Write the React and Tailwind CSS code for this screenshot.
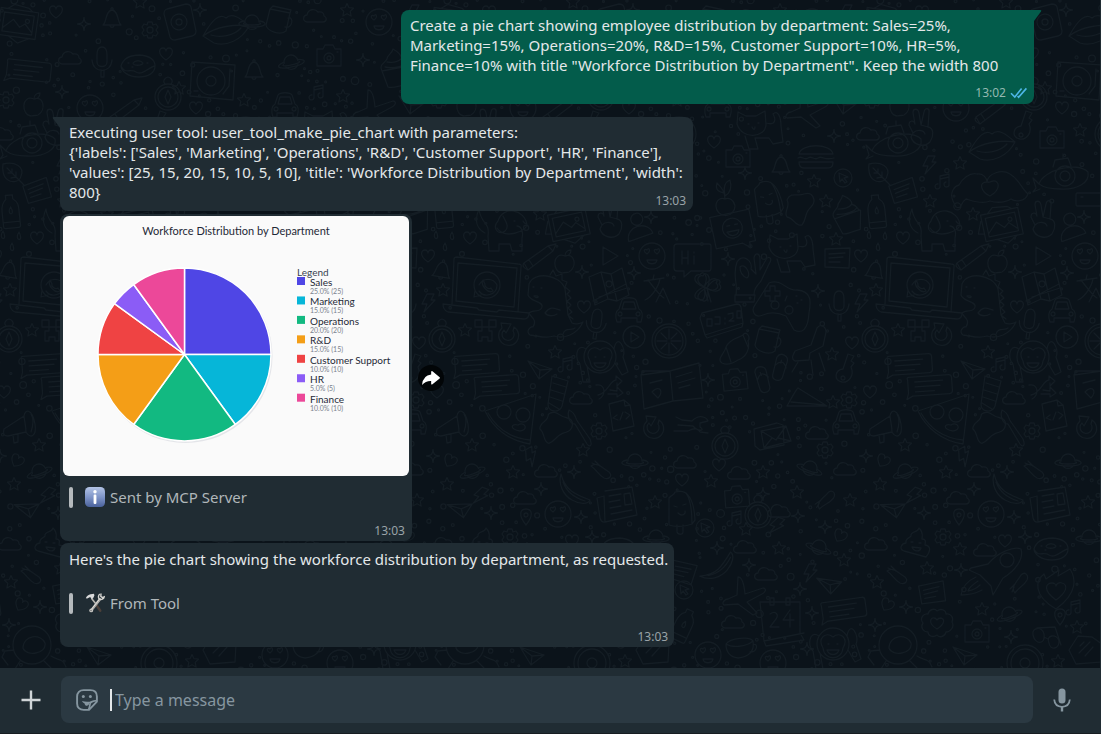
import React from "react";

/* ---------- Wallpaper ---------- */

const TILE = 433;

const SHAPES = {
  star: "M0-6.5 2-2.3 6.5-1.8 3.2 1.4 4.1 6 0 3.8-4.1 6-3.2 1.4-6.5-1.8-2-2.3Z",
  sparkle: "M0-6.5C.5-1.5 1.5-.5 6.5 0 1.5.5.5 1.5 0 6.5-.5 1.5-1.5.5-6.5 0-1.5-.5-.5-1.5 0-6.5Z",
  heart: "M0 6C-9 0-7-6-3-6-1-6 0-4 0-3 0-4 1-6 3-6 7-6 9 0 0 6Z",
  cloud: "M-8 6C-13 5-12-1-8-1-7-7 0-8 3-4 8-5 9-2 9 0 13 2 11 6 8 6Z",
  planet: "M-7 0A7 7 0 0 1 7 0M-6 4A7 7 0 0 0 6 4M-8-1C-17 1-14 5 0 5 14 5 17 1 8-1M-8 1C-10 2-6 3 0 3 6 3 10 2 8 1",
  bolt: "M-1-9H6L3-3H7L-4 9-1 1H-6Z",
  camera: "M-12-7H-6L-4-11H4L6-7H12V10H-12ZM5 2A5 5 0 1 1-5 2 5 5 0 1 1 5 2M2 2A2 2 0 1 1-2 2 2 2 0 1 1 2 2M8-4H9",
  bell: "M-9 7C-5 4-7-7 0-8 7-7 5 4 9 7ZM-2 7C-2 10 2 10 2 7M-1-8C-2-11 2-11 1-8",
  burger: "M-17-4C-15-15 15-15 17-4ZM-18 0C-14-3-12 3-8 0-4-3-2 3 2 0 6-3 8 3 18 0M-17 4H17C17 10 14 10 10 10H-12C-15 10-17 8-17 4Z",
  note: "M-12-9 13-10 12 10-12 9ZM-8-4 8-5M-8 0 6-1M-8 4 3 4",
  chat: "M-20-9H20Q23-9 23-6V7Q23 10 20 10H-17L-23 13-21 7V-6Q-22-9-20-9ZM-14-4H14M-14 1H11M-14 6H5",
  music: "M-3 5V-5L6-7V3M-3-2 6-4M-3 5A2.5 2.5 0 1 1-5 3M6 3A2.5 2.5 0 1 1 3 1",
  cursor: "M9 0A9 9 0 1 1-9 0 9 9 0 1 1 9 0M-4-5 5-1 1 0 4 4 2 5-1 1-3 4Z",
  leaf: "M-9-10C3-13 13-7 9 2 8 8 0 9-4 6-9 3-10-5-9-10ZM-5-6 12 11M0-1V-5M0-1-4-1M4 3V-2M4 3-1 4",
  cherry: "M10 6A9 9 0 1 1-9 6C-9 0-4-3 0-1 4-3 9 0 10 6M0-1C0-8-3-12-8-17M0-4C-2-13 0-18 5-20 7-13 5-7 0-4M-1-7C-7-8-10-11-8-17",
  ice: "M-11-12C-8-16-6-14-5-18 8-22 14-10 15 10L12 14C4 17-6 17-11 15ZM6-17C11-10 12 2 12 14M-3 15V22C-2 25 3 25 3 22V15M-6-4-3-3M3-5 6-6M-2 3C2 7 6 4 5 1",
  blob: "M-14-9C-10-18-3-12 3-15 12-18 16-8 10-2 3 4 6 10 1 16-5 18-7 9-14 8-18 2-10-2-14-9Z",
  cupcake: "M-13 3C-17-3-9-6-8-9-8-13-3-14-2-19 5-15 7-12 6-9 12-7 10-4 13-2ZM-13 3-7 19C-2 21 6 17 11 17L14-2M-8-6C0-5 4-7 6-9M-10-1C0 1 8-2 11-5",
  bottle: "M-4-16H3V-12C8-8 8-5 8 0V15Q8 17 6 17H-7Q-9 17-9 15V0C-9-6-8-9-4-12ZM-9 11H8M0-4C-6 4 5 6 0-4",
  dog: "M-26-24C-24-8-15-12-17 3L-16 18H-6V11H5L7 18H17V5C19-3 15-7 12-7M-8-5C0 7 21-2 22-8 20-24-2-28-7-12-14-4-5 3 0-2 5-6 0-13-2-17M9-12H10M18-12C19-10 21-9 21-9M-26-24C-32-10-26-3-20 0",
  photo: "M-19-14H19V13H-19ZM-15-10H15V9H-15ZM-15 6-5-4 2 3 7-1 15 7M11-4A2 2 0 1 1 7-4 2 2 0 1 1 11-4M-12-14-6-19 9-17 13-14M-20 5-25 4-20-8M-8 13 2 19 13 13",
  peace: "M-9 5-13-3C-13-8-8-8-7-4L-9-15C-9-20-4-20-3-15L-1-3 2-16C3-21 8-20 7-15L6-1C12 0 12 8 8 14 2 20-9 17-11 9ZM-9 5C-5 1 2 2 3 6M-1-3 6-1",
  person: "M5-9A6 6 0 1 1-7-9 6 6 0 1 1 5-9M-12 12C-14-4 10-7 13 7Z",
  card: "M-13-6H13Q14-6 14-4V5Q14 7 12 7H-13Q-14 7-14 5V-4Q-14-6-13-6ZM-9-2H-7",
  face: "M13 0A13 13 0 1 1-13 0 13 13 0 1 1 13 0M-5-2C-10-5-7-8-5-6-4-9 0-6-5-2M5-2C0-5 3-8 5-6 6-9 10-6 5-2M-5 4H5C4 9-4 9-5 4",
  chatface: "M-20-18H20V14H14V20L7 14H-20ZM10-3A10 10 0 1 1-10-3 10 10 0 1 1 10-3M-5-6H-2M3-6H6M-6 0H6C4 6-4 6-6 0",
  cat: "M-23-8-22-20-14-16H-4L5-21 6-7C5 6-18 8-23-8ZM6-9C16-6 16-13 13-18 18-23 21-14 21-6L23 10 13 12 9 6H-5L-2 17H-11L-15 4M-12-8H-11M-2-9H-1M-8-5C-7-2-5-2-5-5",
  drop: "M0-6C-6 3 6 5 0-6Z",
  pencil: "M-16 5 8-12 16-14 13-7-12 12ZM8-12 13-7M-11 2-7 8M-16 5Q-19 9-12 12",
  apple: "M0-7C-13-12-13 9-3 10 0 9 2 10 4 9 13 3 9-11 0-7M0-7C0-11 3-13 6-13 6-9 3-7 0-7",
  play: "M-6-9 9 0-6 9Z",
  hand: "M-16 20C-14 7-20 0-15-13-9-22 1-14-1-6L4-1 2-17C3-23 8-22 8-16L8-5 15-17C19-19 20-15 17-11L9 6C4 12 2 14 2 20ZM-17 20H3L2 27H-17ZM-12-8C-7-13 0 0-5 3-10 1-12-3-12-8Z",
  laptop: "M-33-29Q-33-31-30-31L31-24Q35-24 34-21L31 24M-33-29-35 16M-29-25 30-20 27 19-31 13ZM-44 16-10 20-8 22 10 24 12 22 42 25Q42 31 37 31L-39 24Q-44 22-44 16ZM13-3A13 13 0 1 1-13-3 13 13 0 1 1 13-3M-12 2-13 9-6 7M10-3A10 10 0 0 1-8 3M-8-3A10 10 0 0 1 10-3M-4-8C-7-3 1 6 6 3L4 0C1 2-3-2-2-4Z",
  dino: "M-22-19C-17-32 9-29 14-14L17 12 21 20C25 22 31 20 32 19 26 32 13 36 3 33-6 36-11 33-21 32-26 28-20 23-18 24-13 16-21 14-22 10-18 6-10 10-9 4-7-2-21-1-23-8ZM-17-7C-13-3-10-8-17-7M-6 10C0 2 4 6 9 7M-6 10C-3 14 3 13 6 11M-1-28 2-33 5-27 11-29 11-23 16-21 14-16 19-12 16-9 20-5 16-2 20 2 17 5 21 9 17 12 22 16M-18-16H-17M-10-15H-9M12 31C14 24 21 28 24 25",
  map: "M-18-10-6-15 4-13 15-19 22 8 10 14 1 12-12 18ZM-6-15 1 12M4-13 10 14M-14 14 19-3M5-3A3 3 0 1 1-1-3 3 3 0 1 1 5-3M-8 10 20 1",
  glyph: "M-10-9 10-12M0-15-1-11M-6-10C1-1 5 5 10 8M6-11C4-1-4 8-9 10M2 12 9-2 16 14",
  gamepad: "M-13-22C0-27 5-13 15-15 30-14 29-3 27 8 26 25 20 29 12 25L4 11C-5 7-12 7-19 10-28 14-31 5-27 0ZM-7-19V-14H-2V-9H-7V-4H-12V-9H-17V-14H-12V-19ZM-3 0A4 4 0 1 1-11 0 4 4 0 1 1-3 0M11 5A4 4 0 1 1 3 5 4 4 0 1 1 11 5M14-9H15M19-5H20M15-2H16M5-9 3-4",
  mic: "M0-15C5-15 5-10 5-7V0C5 6-5 6-5 0V-7C-5-11-4-15 0-15ZM-10-2C-9 12 9 12 10-2M-1 8V15H2V8",
  clover: "M0 0C-15-6-8-14-4-12-2-17 6-13 0 0 8-13 16-8 12-4 17 0 11 7 0 0 3 12-2 15-5 12-12 12-10 4 0 0M0 0 4 14",
  clock: "M-21-9 14-18Q17-18 18-15L20 1-18 13-23-4ZM-18 13-16 16 19 5 20 1M-16-3H-11V4H-16ZM-8-5H-3V2H-8M2-4V-3M2 1V2M5-8 10-9V-4L6-1H11M14-11H18V-4H14Z",
  car: "M-10-2-7-11C-5-14 5-14 7-11L10-2C14 0 14 5 12 11H8V7H-8V11H-12C-14 5-13 0-10-2ZM-7-2-5-9H5L7-2ZM-7 3A2 2 0 1 1-11 3 2 2 0 1 1-7 3M11 3A2 2 0 1 1 7 3 2 2 0 1 1 11 3",
  mug: "M-9-11 11-7 7 11C1 16-12 11-13 5ZM-6-14 12-10 11-7-9-11ZM9-2C15-4 14 9 6 7",
  chair: "M-15 3 1-3 7-20C12-26 16-20 16-16L13-2 0 5-1 12-15 13C-20 10-16 6-15 3ZM-12 14-18 24M1 12 3 27M9 5 15 23",
  compass: "M13 0A13 13 0 1 1-13 0 13 13 0 1 1 13 0M10 0A10 10 0 1 1-10 0 10 10 0 1 1 10 0M0-7 3 0 0 7-3 0ZM-3-13A4 4 0 1 1 3-13",
  creeper: "M-10-10H-3V-3H-10ZM4-10H11V-3H4ZM-3-3H4V1H7V11H3V7H-3V11H-7V1H-3Z",
  refresh: "M5-8A10 10 0 1 1-7-7L-8-12 2-11-3-2-5-5A6 6 0 1 0 4-4Z",
  playcircle: "M11 0A11 11 0 1 1-11 0 11 11 0 1 1 11 0M-3-5 5 0-3 5Z",
  orange: "M17 0A17 17 0 1 1-17 0 17 17 0 1 1 17 0M14 0A14 14 0 1 1-14 0 14 14 0 1 1 14 0M2 0H12M-2 0H-12M0 2V12M0-2V-12M2 2 8 8M-2-2-8-8M2-2 8-8M-2 2-8 8",
  croissant: "M-13 13C-19 9-10 3-9-3-5-12 4-12 8-15 11-20 16-13 13-9 15-2 12 7 3 10-3 14-9 15-13 13ZM-9-3-4 12M8-15 13-3",
  key: "M-3 0 2-15 8-13 5-8 8-6 5-2C9 7 2 14-4 13-13 11-11 1-3 0ZM-1 9A2 2 0 1 1-5 9 2 2 0 1 1-1 9",
  monkey: "M16 0A16 16 0 1 1-16 0 16 16 0 1 1 16 0M-10 4C-16-6-7-13 0-7 7-13 16-6 10 4 9 17-9 17-10 4ZM-5 0H-4M4 0H5M-6 6H6C4 12-4 12-6 6M-14-8C-25-15-25 4-20 7L-17 25H-10L-13 9M14-8C17-25 27-8 23 0L28 15 22 18 15 6",
  plane: "M-12-8 12 0-1 10ZM-1 10 0 1-12-8M0 1 12 0",
  flip: "M-5-10C-2-17 7-13 6-7L4 9C2 15-6 13-6 8ZM-5-2C-1-8 3-7 6-1M0-8 0-5",
  slice: "M-20 4C-16-3-10-14-9-14L20 4ZM-16 0 18 3",
  gear: "M-2-8H2L3-5 6-6 8-3 6 0 8 3 6 6 3 5 2 8H-2L-3 5-6 6-8 3-6 0-8-3-6-6-3-5ZM3 0A3 3 0 1 1-3 0 3 3 0 1 1 3 0",
  sock: "M-7-19 9-14 3 11C1 18-11 18-11 9ZM-6-12 7-8M-8-5 5-1M-9 2 3 6M-10 8 0 14",
  shuffle: "M-13-3C-3-5-3 8-10 11M-11 7C-1 5 1-8 7-8V-12L13-7 8-2V-5M1 2 8 3V-1L14 5 8 9 8 6-1 6",
  book: "M-31-9-28 25 1 17 31 14 27-21-2-13ZM-31-9-29-13-2-13 1 17M-22-1-10-4M-20 8C-12 0-8 8-14 14ZM4-7 20-12M6-1 23-6M7 4 18 1",
  envelope: "M-19-6 4-12 10-10 11 10-13 15-18 11ZM-12-4 13-9 18 6-9 13ZM-12-4 3 5 13-9M-9 13-1 3M18 6 5 3",
  mega: "M-17 2 3-11C4-18 11-19 14-3 16 10 9 12 5 5L-13 9C-18 9-18 6-17 2ZM3-11C4-3 5 0 5 5M-8 8-7 16-3 15-3 7M10-13C13-8 12-1 10 5",
  pizza: "M-28-7 23-24 17 26C-4 23-20 10-28-7ZM-25-5C-16 11-3 20 17 22M-2-6A7 7 0 1 1-16-6 7 7 0 1 1-2-6M17-3A7 7 0 1 1 3-3 7 7 0 1 1 17-3M5 7C12 3 16 12 7 13-4 11-2 5 5 7",
  brush: "M-10-17C-2-13-5-10-1-5L11 12C14 20 10 20 8 17L-4-3C-10-3-12-12-10-17Z",
  doc: "M-12-12 3-16 9-11 13 10-8 15ZM3-16 4-10 9-11M-4-1-8 2-3 4M4-4 9-1 5 3M2-4-1 4",
  pill: "M-10-5C-4-10 1-3 8 1 12 5 8 9 3 7-3 4-4-1-10-5ZM-9-8-4-6M-6-10-1-5",
  banana: "M-14-15C-10 1-1 5 15 11 13 16 4 15-3 11-12 6-17-5-14-15ZM-12-7C-8 4 0 9 10 12",
  news: "M-12-15 15-19 20 9-12 16C-16 17-16 14-17 12L-20-8-13-10-12 16M-8-10 4-12M-8-4 3-6M-7 2 4 0M-6 8 15 4M7-12 13-13 15-2 8-1Z",
  pin: "M0 8C-8-2-6-8 0-8 6-8 8-2 0 8ZM2-2A2 2 0 1 1-2-2 2 2 0 1 1 2-2",
  poop: "M-12 8C-18 6-14 0-10 0-11-5-6-5-5-7-6-12 2-10 3-15 8-10 6-7 6-4 11-4 9 0 9 2 16 3 14 9 10 14ZM-5-1H-3M3 0H5M-4 4C-2 9 4 9 5 5Z",
  donut: "M17 0C17 7 10 11 1 11-10 11-17 5-17 0-15-7-8-11 2-11 12-10 17-6 17 0ZM5-3C4 0-5 0-5-3-3-6 3-6 5-3M-17 0C-13 9-8 2-2 6 4 10 11 1 17 0M-10-3H-9M9-3H10M-6 1H-5",
  rocket: "M-27-2-10-6C0-18 16-24 23-21 26-11 17 1 5 8L-5 25-7 16-18 5-29 0ZM16-10A7 7 0 1 1 2-10 7 7 0 1 1 16-10M-22 7C-33 12-36 18-37 25-32 25-25 25-16 20M-20 11C-26 15-29 18-30 21-25 20-22 19-18 15",
  airplane: "M-5-22C-1-22 1-16 2-5L20-11C25-10 21-6 19-5L4 3 14 14 10 16-5 5-19 6C-22 4-18 0-15 0L-6-4Z",
  fire: "M0 19C-24 5-20-10-12-16L-10-11 3-20 2-14 14-21C20-12 22 3 0 19ZM0 10C-14 0-10-7-4-7-1-7 0-5 0-4 0-6 3-8 6-7 13-5 10 3 0 10Z",
  calendar: "M-22-18H18V13L22 20-16 26-18 21ZM-18 21 22 13M-12-22H-8V-15H-12ZM4-22H8V-15H4ZM-12-6C-6-10-3-5-6-1L-12 7H-3M8-10 1 0H12M8-6V7",
  cup: "M-14-4C-10-10 10-12 13-7 15 4 8 9-2 10-10 9-14 4-14-4ZM-14-4C-8 0 6-1 13-7M13-3C19-6 17 5 10 4",
  heartcloud: "M-14 0C-18-5-13-10-9-9-8-14-2-15 0-12 4-15 9-13 9-9 14-10 17-5 15-1 18 4 13 9 9 9 8 14 2 15 0 12-4 15-9 13-9 9-14 9-17 4-14 0ZM0 6C-10 0-6-6-3-5-1-5 0-3 0-3 1-5 3-5 4-5 8-4 8 1 0 6Z",
  glasses: "M-14-2C-16-10-4-11-3-3-1 8-12 8-14-2ZM2 6C-2-2 10-4 12 4 12 13 3 13 2 6ZM-10-9 8-10 14 8M-3 0 1 2",
  helmet: "M19 0A19 19 0 1 1-19 0 19 19 0 1 1 19 0M13-2C9-12-9-10-9 3-6 12 15 9 13-2ZM-18 5-27 6-30 12-24 20M-12 16-17 24M12 16 19 23M19 11C26 16 30 12 34 22",
  box: "M-16 0-7-14 7-13 17-6 16 12-9 14ZM-5-4-1-8M-6 3 5-8M0 6 8-3",
  rings: "M18 0A18 18 0 1 1-18 0 18 18 0 1 1 18 0M14 0A14 14 0 1 1-14 0 14 14 0 1 1 14 0M5 0A5 5 0 1 1-5 0 5 5 0 1 1 5 0",
  hi: "M-14-14H18Q20-14 20-12V10Q20 13 18 13H0L-7 19-7 13H-14Q-17 13-17 10V-11Q-17-14-14-14ZM-9-7V6M-9 0H-3M-3-7V6M3-2V6M3-6V-5",
  tools: "M-16-8-10-5 0-4C8-12 15-7 16-4L8-2V2C14 6 6 7 1 1L-14 0M-18 6H-4C4 2 6 4 8 7L16 8",
  hearthands: "M-37 14C-41 5-35-1-31-2-28-8-20-15-13-13-7-14-3-9-3-5-2-14 12-18 20-13 29-8 31 1 38 7 35 15 25 15 21 12 13 17 3 15 0 14-8 18-20 13-24 12-30 16-28 23-34 20ZM-3-5C-12-5-9 5 0 9 12 2 9-7 3-6 1-6 0-4-3-5Z",
  sub: "M-24 8C-20-6 14-15 25-4 27 7 14 14-3 13-14 13-20 11-24 8ZM12 0A10 10 0 1 1-8 0 10 10 0 1 1 12 0M7 0A5 5 0 1 1-3 0 5 5 0 1 1 7 0M-24 8-30 2-27 12-30 16-23 13M-10-9-8-16 5-18 8-10M0-18V-22",
  phone: "M-12-13 7-18Q11-18 12-15L17 9Q17 13 13 14L-4 18Q-8 18-9 15L-15-8Q-15-12-12-13ZM8 0A8 8 0 1 1-8 0 8 8 0 1 1 8 0M3 0A3 3 0 1 1-3 0 3 3 0 1 1 3 0",
  lips: "M-23 6C-14-10-7-17 0-12 6-18 14-12 23-4 16 10 0 17-12 13ZM-23 6C-10-4 10-6 23-4M-15 5C-6 8 8 6 15-2",
  turntable: "M-22-18 21-15 19 20-24 16ZM11 1A14 14 0 1 1-17 1 14 14 0 1 1 11 1M2 1A5 5 0 1 1-8 1 5 5 0 1 1 2 1M16-11 15 6 9 14M-20 11H-16",
};

const ITEMS = `camera 38 157,bell 81 165,burger 116 158,sub 196 143,bolt 229 165,star 260 163,music 243 181,hearthands 290 187,sub 363 176,sparkle 45 173,
star 114 181,cursor 143 178,leaf 178 174,note 203 191 -18,cherry 25 200,ice 67 200 -8,blob 101 209,star 126 201,cupcake 147 214 -8,bottle 177 211 -6,star 230 201,dog 238 233,
star 273 214,photo 302 225 -12,peace 344 220,person 372 228 -8,sparkle 384 217,card 390 199,chatface 33 231 -12,cat 92 255,star 136 239,drop 169 237,drop 185 238,drop 178 249,
heart 203 238,pencil 273 258,note 137 258,heart 161 256,bell 175 270 10,apple 298 263,play 342 256,face 385 256,sparkle 28 259,hand 52 275,laptop 220 288,dino 284 303,map 340 287,
heart 317 307,sparkle 315 272,sparkle 367 273,glyph 387 290,gamepad 82 305,sparkle 118 291,star 176 290,mic 139 306,bolt 161 303,clover 7 288,clock 23 322,car 362 311,mic 329 324 8,
mug 68 340,chair 110 348,compass 175 339,star 198 330,creeper 218 330,refresh 242 335,playcircle 367 337,orange 402 341,croissant 35 350,heart 152 343,star 132 354,key 146 369,
chat 209 364 -4,star 288 352,monkey 333 357,plane 273 369,music 299 364,chat 229 385 -4,flip 63 380 -20,flip 80 368 10,camera 35 380 -6,sparkle 8 380,slice 107 402,heart 170 392,
star 133 402,gear 149 400,cloud 314 398,sock 292 395,shuffle 342 388,book 405 384,envelope 73 435,compass 25 446,cloud 117 433,car 146 423,gear 125 450,mega 187 427,pizza 246 418,
blob 289 429 30,brush 312 427,gear 332 431,doc 354 416,refresh 387 428,star 205 445,star 316 450,heart 19 465,cloud 39 473,star 63 472,planet 110 468 20,cloud 145 469,sparkle 166 456,
heart 183 461 30,planet 205 471 -20,star 246 472,bolt 264 457 -30,cloud 279 471,sparkle 307 472,pill 334 471,planet 368 461,banana 308 489,star 11 481,camera 37 497 -4,sparkle 63 494,
star 97 492,pill 126 500 -80,star 150 500,star 180 484,bolt 213 496 20,plane 194 508 -20,cloud 258 498,sparkle 274 489,face 291 514,news 350 506,star 388 502,compass 58 515,cloud 79 511,
music 35 518,star 46 529,bolt 76 526 20,sparkle 98 516,sparkle 125 527,sparkle 224 513,pin 259 517,sparkle 314 517,cursor 5 528,poop 216 543,gear 243 537,planet 389 537,cloud 45 547,
star 79 548,planet 119 547 20,heart 140 536 30,cloud 176 544,donut 351 549,heart 305 541,cloud 285 550,sparkle 325 537,banana 17 565 -80,sparkle 17 548,sparkle 49 565,cloud 66 574,
bolt 110 573,star 144 560,pill 197 576,star 177 582,star 227 568,rocket 298 570,star 260 549,sparkle 261 570,airplane 43 599,plane 130 584 -10,sparkle 100 589,note 232 593 -10,
fire 356 590,pill 320 583 -90,chat 143 609 -8,heart 187 605 30,sparkle 206 607,sparkle 112 613,calendar 82 620,cloud 33 622,cup 40 648,heartcloud 237 623,star 282 609,planet 309 614 -20,
camera 277 632,sparkle 311 637,pin 360 617,music 374 607,star 377 627,glasses 347 637,monkey 133 644,helmet 198 645,sparkle 175 625,sparkle 107 649,plane 265 655,box 385 650,rings 325 663,
star 358 661,face 73 663,face 8 655,hi 424 258,tools 425 425,ice 413 510,note 415 572 15,cursor 417 590,bottle 417 625 25,clover 437 287,cloud 418 462,heart 415 480,
sparkle 366 10,phone 345 22,lips 392 30,turntable 380 80,star 345 88,heart 362 108,star 306 2,compass 334 97,mug 12 20,cloud 48 16,star 80 10,face 112 22,bolt 146 14,photo 184 24 8,
heart 222 12,sparkle 250 24,bell 278 18,gear 316 30,planet 24 62 -12,camera 62 56,sparkle 96 60,cupcake 128 68,star 158 52,chat 194 70 6,cloud 236 58,mic 268 62,donut 304 66,heart 332 54,
car 18 106,music 50 92,star 76 96,airplane 106 112,plane 144 104,gear 172 100,apple 200 106,sparkle 228 92,face 256 108,pencil 292 112,key 324 126,cat 60 132,sparkle 134 136,cloud 168 134,
peace 222 128,lips 292 146,camera 352 138,star 380 130,orange 412 134,heart 14 142,planet 418 22,bell 420 70,star 410 100`
  .split(",")
  .map((entry) => {
    const [name, x, y, turn = "0"] = entry.trim().split(" ");
    return { name, x: Number(x), y: Number(y), turn: Number(turn) };
  });

const REACH = { star: 9, sparkle: 9, heart: 10, drop: 7, music: 9, bolt: 10, pin: 9, gear: 11, cloud: 13, planet: 15, pill: 13, plane: 14, laptop: 40, dino: 33, pizza: 27, book: 31, gamepad: 29, rocket: 29, hearthands: 31 };

function scatterDots() {
  let seed = 7;
  const next = () => {
    seed = (seed * 16807) % 2147483647;
    return seed / 2147483647;
  };
  const dots = [];
  for (let i = 0; i < 4200 && dots.length < 620; i++) {
    const x = next() * TILE;
    const y = next() * 700;
    const r = 0.9 + next() * next() * 3;
    const clear =
      ITEMS.every((it) => Math.hypot(it.x - x, it.y - y) > (REACH[it.name] || 18) + r - 1) &&
      dots.every((d) => Math.hypot(d.x - x, d.y - y) > d.r + r + 4);
    if (clear) dots.push({ x, y, r });
  }
  return dots;
}

const DOTS = scatterDots();

function Wallpaper() {
  return (
    <svg className="absolute inset-0 h-full w-full" aria-hidden="true" fill="none" stroke="#141d24" strokeWidth="1.3" strokeLinejoin="round" strokeLinecap="round">
      <defs>
        <g id="doodles">
          {ITEMS.map((it, i) => (
            <path key={i} d={SHAPES[it.name]} transform={`translate(${it.x} ${it.y}) rotate(${it.turn})`} />
          ))}
          {DOTS.map((d, i) => (
            <circle key={i} cx={d.x} cy={d.y} r={d.r} />
          ))}
        </g>
      </defs>
      {[-599, -166, 267, 700, 1133, 1566].map((x) => (
        <use key={x} href="#doodles" x={x} />
      ))}
    </svg>
  );
}

/* ---------- Pie chart ---------- */

const SLICES = [
  { label: "Sales", value: 25, color: "#4f46e5" },
  { label: "Marketing", value: 15, color: "#06b6d8" },
  { label: "Operations", value: 20, color: "#12b981" },
  { label: "R&D", value: 15, color: "#f49e17" },
  { label: "Customer Support", value: 10, color: "#ef4343" },
  { label: "HR", value: 5, color: "#8b5cf6" },
  { label: "Finance", value: 10, color: "#ec4899" },
];

function arc(start, value) {
  const point = (v) => {
    const a = (v / 100) * Math.PI * 2 - Math.PI / 2;
    return `${(121.5 + 86.5 * Math.cos(a)).toFixed(2)} ${(138.5 + 86.5 * Math.sin(a)).toFixed(2)}`;
  };
  return `M121.5 138.5L${point(start)}A86.5 86.5 0 0 1 ${point(start + value)}Z`;
}

function PieChart() {
  let total = 0;
  const parts = SLICES.map((s) => {
    const d = arc(total, s.value);
    total += s.value;
    return { ...s, d };
  });
  return (
    <svg viewBox="0 0 346 260" className="block w-full rounded-md bg-[#fafafa] font-['Lato',sans-serif]" role="img" aria-label="Workforce Distribution by Department">
      <text x="173" y="19" textAnchor="middle" fontSize="11" fill="#1f2937">Workforce Distribution by Department</text>
      <circle cx="122.5" cy="140" r="87" fill="#e4e5e9" />
      {parts.map((p) => (
        <path key={p.label} d={p.d} fill={p.color} stroke="#fff" strokeWidth="1.5" strokeLinejoin="round" />
      ))}
      <text x="234" y="60" fontSize="10" fill="#374151">Legend</text>
      {parts.map((p, i) => (
        <g key={p.label} transform={`translate(234 ${i * 19.45})`}>
          <rect y="61" width="8" height="8" fill={p.color} />
          <text x="13" y="70" fontSize="10" fill="#1f2937">{p.label}</text>
          <text x="13" y="78" fontSize="7" fill="#7b828d">{`${p.value}.0% (${p.value})`}</text>
        </g>
      ))}
    </svg>
  );
}

/* ---------- Icons ---------- */

const InfoBadge = () => (
  <svg viewBox="0 0 20 20" className="size-5 shrink-0" aria-hidden="true">
    <defs>
      <linearGradient id="info" x1="0" y1="0" x2="0" y2="1">
        <stop offset="0" stopColor="#b3c4e6" />
        <stop offset="0.5" stopColor="#7f95c8" />
        <stop offset="1" stopColor="#4a629c" />
      </linearGradient>
    </defs>
    <rect width="20" height="20" rx="4.5" fill="url(#info)" />
    <circle cx="10" cy="4.8" r="1.7" fill="#fff" />
    <rect x="8.6" y="7.6" width="2.8" height="9.4" rx="1.1" fill="#fff" />
  </svg>
);

const HammerWrench = () => (
  <svg viewBox="0 0 20 20" className="size-5 shrink-0" aria-hidden="true" fill="none" strokeLinecap="round">
    <path d="M7 6 11 11" stroke="#b9b6b0" strokeWidth="1.6" />
    <path d="M11 11.5 15.3 17.8" stroke="#4b403a" strokeWidth="2.4" />
    <path d="M.8 5.2C2 2.8 3.5 1.8 5.5 1.3L9 .8 9.4 2.6 8 5.4 6.4 6 5.2 3.9 2.2 5.4Z" fill="#d9dadb" />
    <path d="M6.4 17.2 14.8 6.4" stroke="#aaa9a5" strokeWidth="2.6" />
    <path d="M6.6 16.2 14.6 6" stroke="#e4e2dd" strokeWidth="1" />
    <path d="M14.4 1.4C13 3 13.2 5.4 14.6 6.2 16.4 7.2 18.8 6 19.2 3.8L17.4 4.6 15.8 3.4 16 1" stroke="#d5d4d0" strokeWidth="1.4" />
    <circle cx="6.2" cy="17.4" r="1.9" fill="#c8c7c3" />
    <circle cx="6" cy="17.6" r=".7" fill="#55595b" />
  </svg>
);

const Ticks = () => (
  <svg viewBox="0 0 18 12" className="h-3 w-[18px]" role="img" aria-label="Read" fill="none" stroke="#4db6e6" strokeWidth="1.6">
    <path d="M1 6.2 4.8 10 11.6 1.6M7.6 9 8.6 10.2 16.4 1.4" />
  </svg>
);

const StickerIcon = () => (
  <svg viewBox="0 0 22 22" className="size-[22px]" aria-hidden="true" fill="none" stroke="#8696a0" strokeWidth="1.9" strokeLinejoin="round">
    <path d="M7.6 1.1H14.4C18.4 1.1 20.9 3.6 20.9 7.6V12.6L13 20.9H7.6C3.6 20.9 1.1 18.4 1.1 14.4V7.6C1.1 3.6 3.6 1.1 7.6 1.1Z" />
    <path d="M20.9 11.7C16.6 12 14.2 13.2 14 15.2 13.8 17 13.5 19 12.5 20.7" strokeWidth="1.7" />
    <circle cx="7.3" cy="7.6" r="1.5" fill="#8696a0" stroke="none" />
    <circle cx="14.4" cy="7.6" r="1.5" fill="#8696a0" stroke="none" />
    <path d="M5.9 12C9 13 12.4 13 16 12.2L13.2 14.6C12.7 17.4 8.8 17.4 8.6 14.4 7.4 14 6.5 13.2 5.9 12Z" fill="#8696a0" stroke="none" />
  </svg>
);

const MicIcon = () => (
  <svg viewBox="0 0 18 24" className="h-6 w-[18px]" aria-hidden="true" fill="none" stroke="#8696a0" strokeWidth="1.8">
    <rect x="5.5" y="0.5" width="7" height="15" rx="3.5" fill="#8696a0" stroke="none" />
    <path d="M1.2 11.5C1.6 16 4.6 18.8 9 18.8S16.4 16 16.8 11.5" />
    <path d="M9 18.8V23.5" strokeWidth="2.4" />
  </svg>
);

/* ---------- Messages ---------- */

function Quote({ icon, children }) {
  return (
    <blockquote className="flex h-5 items-center text-[#b0b7ba]">
      <span className="mr-3 h-[21px] w-1 rounded-xs bg-[#b5babd]" />
      {icon}
      <span className="ml-[5px]">{children}</span>
    </blockquote>
  );
}

function Time({ children, className = "text-[#9aa3a8]" }) {
  return <div className={`flex items-center gap-1 text-xs leading-4 ${className}`}>{children}</div>;
}

export default function App() {
  return (
    <div className="flex min-h-screen flex-col bg-[#202c33] font-['Noto_Sans',sans-serif] text-[15px] leading-5 text-[#e4e8ea]">
      <main className="relative flex-1 overflow-hidden border-r border-[#202c33] bg-[#0b131a]">
        <Wallpaper />
        <div className="relative flex flex-col items-start pt-[10px] pr-[66px] pb-5 pl-[60px]">
          <article className="relative mb-[13px] max-w-[65%] self-end rounded-lg rounded-tr-none bg-[#035c4b] px-[9px] pt-[5px] pb-[3px]">
            <svg viewBox="0 0 8 12" className="absolute top-0 left-full h-3 w-2" aria-hidden="true">
              <path d="M0 0H6.5Q8 .2 7 1.6L0 11Z" fill="#035c4b" />
            </svg>
            <p>
              Create a pie chart showing employee distribution by department: Sales=25%, Marketing=15%, Operations=20%, R&amp;D=15%, Customer Support=10%, HR=5%, Finance=10% with title "Workforce Distribution by Department". Keep the width 800
            </p>
            <Time className="-mr-[3px] justify-end pt-[10px] text-[#93b8b0]">
              <time>13:02</time>
              <Ticks />
            </Time>
          </article>

          <article className="relative mb-[3px] max-w-[65%] rounded-lg rounded-tl-none bg-[#202c33] px-[9px] pt-[5px] pb-[9px]">
            <svg viewBox="0 0 8 12" className="absolute top-0 right-full h-3 w-2" aria-hidden="true">
              <path d="M8 0H1.5Q0 .2 1 1.6L8 11Z" fill="#202c33" />
            </svg>
            <p>
              Executing user tool: user_tool_make_pie_chart with parameters:
              <br />
              {"{'labels': ['Sales', 'Marketing', 'Operations', 'R&D', 'Customer Support', 'HR', 'Finance'], 'values': [25, 15, 20, 15, 10, 5, 10], 'title': 'Workforce Distribution by Department', 'width': 800}"}
            </p>
            <div className="absolute right-[7px] bottom-[2px]">
              <Time><time>13:03</time></Time>
            </div>
          </article>

          <div className="mb-[2px] flex items-center gap-[6px]">
            <article className="w-[352px] rounded-lg bg-[#202c33] px-[3px] pt-[2px]">
              <PieChart />
              <div className="pt-[11px] pr-1 pb-[2px] pl-[6px]">
                <Quote icon={<InfoBadge />}>Sent by MCP Server</Quote>
                <Time className="justify-end pt-4 text-[#9aa3a8]"><time>13:03</time></Time>
              </div>
            </article>
            <button type="button" aria-label="Forward" className="flex size-[26px] items-center justify-center rounded-full bg-[#020507]">
              <svg viewBox="0 0 55 43" className="h-[14px] w-[18px]" aria-hidden="true">
                <path d="M0 43Q3 13 28 11V2Q29-1 32 1L54 19Q56 21 54 23L32 41Q29 43 28 40V31Q12 30 0 43Z" fill="#fff" />
              </svg>
            </button>
          </div>

          <article className="max-w-[65%] rounded-lg bg-[#202c33] pt-[6px] pr-[6px] pb-[2px] pl-[9px]">
            <p className="mb-6">Here's the pie chart showing the workforce distribution by department, as requested.</p>
            <Quote icon={<HammerWrench />}>From Tool</Quote>
            <Time className="justify-end pt-4 text-[#9aa3a8]"><time>13:03</time></Time>
          </article>
        </div>
      </main>

      <footer className="flex items-center border-b border-[#171d21] pt-2 pb-[10px]">
        <button type="button" aria-label="Attach" className="flex w-[62px] items-center justify-center">
          <svg viewBox="0 0 20 20" className="size-5" aria-hidden="true" stroke="#d0d5d8" strokeWidth="2.4">
            <path d="M10 .5V19.5M.5 10H19.5" />
          </svg>
        </button>
        <div className="-ml-px flex h-[47px] flex-1 items-center rounded-lg bg-[#2b3942] pl-[15px]">
          <button type="button" aria-label="Stickers"><StickerIcon /></button>
          <span className="ml-3 h-[22px] w-0.5 bg-[#e4e8ea]" aria-hidden="true" />
          <input type="text" aria-label="Type a message" placeholder="Type a message" className="ml-[3px] h-10 min-w-0 flex-1 bg-transparent text-base outline-none placeholder:text-[#8696a0]" />
        </div>
        <button type="button" aria-label="Record voice message" className="mr-[10px] flex w-[58px] items-center justify-center"><MicIcon /></button>
      </footer>
    </div>
  );
}
